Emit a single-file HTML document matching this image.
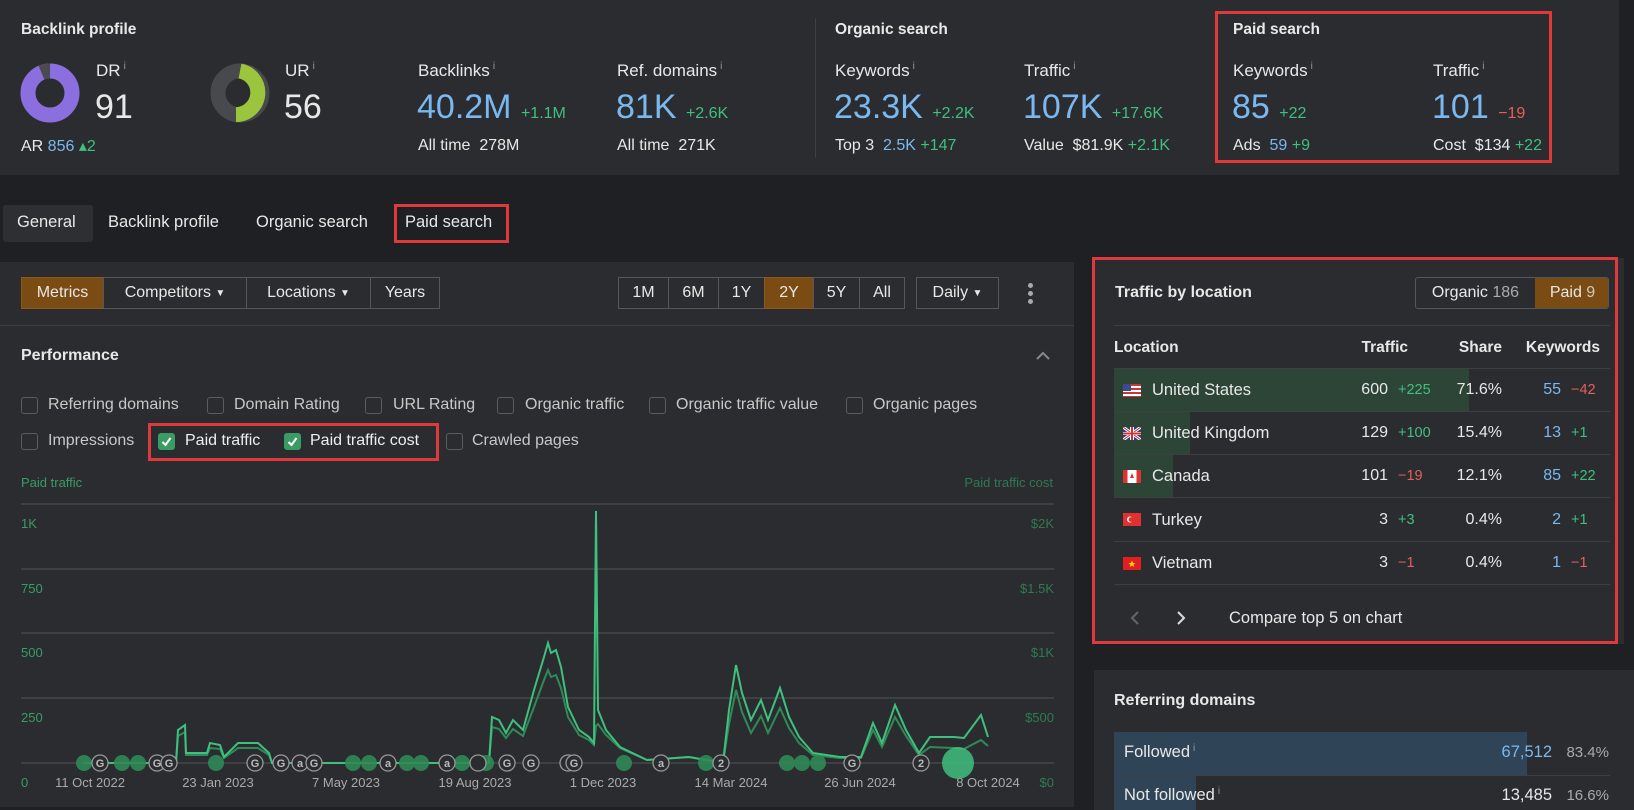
<!DOCTYPE html>
<html><head><meta charset="utf-8"><style>
*{margin:0;padding:0;box-sizing:border-box}
body{width:1634px;height:810px;background:#1f2023;font-family:"Liberation Sans",Arial,sans-serif;color:#e8e8e8;position:relative;overflow:hidden;font-size:16px}
.a{position:absolute;white-space:nowrap}
.p{position:absolute;background:#2b2c2f}
.b{color:#7ab8f0}.g{color:#3fc07e}.r{color:#e3605e}
.h{font-weight:bold;font-size:15.5px}
.lab{font-size:17px}
.big{font-size:34px;line-height:34px}
.sm{font-size:14.5px}
.i{font-size:10px;color:#999;vertical-align:top;margin-left:3px}
.red{position:absolute;border:3px solid #e0393b}
.btn{position:absolute;top:277px;height:32px;border:1px solid #55575a;display:flex;align-items:center;justify-content:center;font-size:16px}
.cb{position:absolute;width:17px;height:17px;border:1px solid #5a5c60;border-radius:3px}
.cbk{background:#3a9c64;border-color:#3a9c64}
.cl{position:absolute;font-size:16px;color:#c8c8c8}
.tr{position:absolute;left:1114px;width:496px;height:43px;border-bottom:1px solid #3d3f42}
</style></head><body>
<!-- top panel -->
<div class="p" style="left:0;top:0;width:1619px;height:175px"></div>
<div style="position:absolute;left:815px;top:18px;width:1px;height:140px;background:#3c3e41"></div>
<div class="a h" style="left:21px;top:21px">Backlink profile</div>
<svg class="a" style="left:20px;top:63px" width="60" height="60"><circle cx="30" cy="30" r="22" fill="none" stroke="#8b6fde" stroke-width="15"/><path d="M30 8 A22 22 0 0 0 21.5 9.7" fill="none" stroke="#4a4b50" stroke-width="15"/></svg>
<div class="a lab" style="left:96px;top:61px">DR<span class="i">i</span></div>
<div class="a big" style="left:95px;top:90px">91</div>
<div class="a lab" style="left:21px;top:136px;font-size:16px">AR <span class="b">856</span> <span class="g">▴2</span></div>
<svg class="a" style="left:210px;top:63px" width="60" height="60"><circle cx="30" cy="30" r="22" fill="none" stroke="#48494d" stroke-width="15"/><path d="M30 8 A22 22 0 0 1 26 51.6" fill="none" stroke="#9bc53d" stroke-width="15"/></svg>
<div class="a lab" style="left:285px;top:61px">UR<span class="i">i</span></div>
<div class="a big" style="left:284px;top:90px">56</div>
<div class="a lab" style="left:418px;top:61px">Backlinks<span class="i">i</span></div>
<div class="a big b" style="left:417px;top:90px">40.2M <span class="g" style="font-size:16px">+1.1M</span></div>
<div class="a" style="left:418px;top:137px">All time&nbsp; 278M</div>
<div class="a lab" style="left:617px;top:61px">Ref. domains<span class="i">i</span></div>
<div class="a big b" style="left:616px;top:90px">81K <span class="g" style="font-size:16px">+2.6K</span></div>
<div class="a" style="left:617px;top:137px">All time&nbsp; 271K</div>
<div class="a h" style="left:835px;top:21px">Organic search</div>
<div class="a lab" style="left:835px;top:61px">Keywords<span class="i">i</span></div>
<div class="a big b" style="left:834px;top:90px">23.3K <span class="g" style="font-size:16px">+2.2K</span></div>
<div class="a" style="left:835px;top:137px">Top 3&nbsp; <span class="b">2.5K</span> <span class="g">+147</span></div>
<div class="a lab" style="left:1024px;top:61px">Traffic<span class="i">i</span></div>
<div class="a big b" style="left:1023px;top:90px">107K <span class="g" style="font-size:16px">+17.6K</span></div>
<div class="a" style="left:1024px;top:137px">Value&nbsp; $81.9K <span class="g">+2.1K</span></div>
<div class="red" style="left:1215px;top:11px;width:337px;height:152px"></div>
<div class="a h" style="left:1233px;top:21px">Paid search</div>
<div class="a lab" style="left:1233px;top:61px">Keywords<span class="i">i</span></div>
<div class="a big b" style="left:1232px;top:90px">85 <span class="g" style="font-size:16px">+22</span></div>
<div class="a" style="left:1233px;top:137px">Ads&nbsp; <span class="b">59</span> <span class="g">+9</span></div>
<div class="a lab" style="left:1433px;top:61px">Traffic<span class="i">i</span></div>
<div class="a big b" style="left:1432px;top:90px">101 <span class="r" style="font-size:16px">−19</span></div>
<div class="a" style="left:1433px;top:137px">Cost&nbsp; $134 <span class="g">+22</span></div>
<!-- tabs -->
<div style="position:absolute;left:3px;top:205px;width:90px;height:37px;background:#2e2f33;border-radius:3px"></div>
<div class="a" style="left:17px;top:213px;font-size:16.5px">General</div>
<div class="a" style="left:108px;top:213px;font-size:16.5px">Backlink profile</div>
<div class="a" style="left:256px;top:213px;font-size:16.5px">Organic search</div>
<div class="a" style="left:405px;top:213px;font-size:16.5px">Paid search</div>
<div class="red" style="left:394px;top:204px;width:115px;height:39px"></div>
<!-- main panel -->
<div class="p" style="left:0;top:262px;width:1074px;height:545px"></div>
<div class="btn" style="left:21px;width:83px;background:#7a4c13;border-color:#8a5a1c">Metrics</div>
<div class="btn" style="left:103px;width:144px">Competitors&nbsp; <span style="font-size:10px">▼</span></div>
<div class="btn" style="left:246px;width:125px">Locations&nbsp; <span style="font-size:10px">▼</span></div>
<div class="btn" style="left:370px;width:70px">Years</div>
<div class="btn" style="left:618px;width:51px">1M</div>
<div class="btn" style="left:668px;width:51px">6M</div>
<div class="btn" style="left:718px;width:47px">1Y</div>
<div class="btn" style="left:764px;width:50px;background:#7a4c13;border-color:#8a5a1c">2Y</div>
<div class="btn" style="left:813px;width:47px">5Y</div>
<div class="btn" style="left:859px;width:46px">All</div>
<div class="btn" style="left:916px;width:83px">Daily&nbsp; <span style="font-size:10px">▼</span></div>
<div class="a" style="left:1028px;top:283px;width:6px"><div style="width:5px;height:5px;border-radius:3px;background:#aaa;margin-bottom:3px"></div><div style="width:5px;height:5px;border-radius:3px;background:#aaa;margin-bottom:3px"></div><div style="width:5px;height:5px;border-radius:3px;background:#aaa"></div></div>
<div style="position:absolute;left:0;top:325px;width:1074px;height:1px;background:#3c3e41"></div>
<div class="a h" style="left:21px;top:347px;font-size:16px">Performance</div>
<svg class="a" style="left:1035px;top:350px" width="16" height="12"><path d="M2 9 L8 3 L14 9" fill="none" stroke="#888" stroke-width="2"/></svg>
<div class="cb" style="left:21px;top:397px"></div><div class="cl" style="left:48px;top:396px">Referring domains</div>
<div class="cb" style="left:207px;top:397px"></div><div class="cl" style="left:234px;top:396px">Domain Rating</div>
<div class="cb" style="left:365px;top:397px"></div><div class="cl" style="left:393px;top:396px">URL Rating</div>
<div class="cb" style="left:497px;top:397px"></div><div class="cl" style="left:525px;top:396px">Organic traffic</div>
<div class="cb" style="left:649px;top:397px"></div><div class="cl" style="left:676px;top:396px">Organic traffic value</div>
<div class="cb" style="left:846px;top:397px"></div><div class="cl" style="left:873px;top:396px">Organic pages</div>
<div class="cb" style="left:21px;top:433px"></div><div class="cl" style="left:48px;top:432px">Impressions</div>
<div class="cb cbk" style="left:158px;top:433px"><svg width="15" height="15"><path d="M3.5 8 L6.5 11 L11.5 4" fill="none" stroke="#fff" stroke-width="2"/></svg></div><div class="cl" style="left:185px;top:432px;color:#eee">Paid traffic</div>
<div class="cb cbk" style="left:284px;top:433px"><svg width="15" height="15"><path d="M3.5 8 L6.5 11 L11.5 4" fill="none" stroke="#fff" stroke-width="2"/></svg></div><div class="cl" style="left:310px;top:432px;color:#eee">Paid traffic cost</div>
<div class="cb" style="left:446px;top:433px"></div><div class="cl" style="left:472px;top:432px">Crawled pages</div>
<div class="red" style="left:148px;top:423px;width:291px;height:38px"></div>
<div class="a" style="left:21px;top:475px;font-size:13px;color:#3a9c64">Paid traffic</div>
<div class="a" style="left:960px;top:475px;font-size:13px;color:#2f7a50;width:93px;text-align:right">Paid traffic cost</div>
<svg class="a" style="left:0;top:490px" width="1074" height="317">
<g stroke="#45474a" stroke-width="1.5"><line x1="21" y1="14" x2="1054" y2="14"/><line x1="21" y1="79" x2="1054" y2="79"/><line x1="21" y1="143" x2="1054" y2="143"/><line x1="21" y1="208" x2="1054" y2="208"/><line x1="21" y1="273" x2="1054" y2="273"/></g>
<g font-family="Liberation Sans,Arial,sans-serif" font-size="13" fill="#3a9c64"><text x="21" y="38">1K</text><text x="21" y="103">750</text><text x="21" y="167">500</text><text x="21" y="232">250</text><text x="21" y="297">0</text></g>
<g font-family="Liberation Sans,Arial,sans-serif" font-size="13" fill="#2f7a50" text-anchor="end"><text x="1054" y="38">$2K</text><text x="1054" y="103">$1.5K</text><text x="1054" y="167">$1K</text><text x="1054" y="232">$500</text><text x="1054" y="297">$0</text></g>
<g font-family="Liberation Sans,Arial,sans-serif" font-size="13" fill="#aaa" text-anchor="middle"><text x="90" y="297">11 Oct 2022</text><text x="218" y="297">23 Jan 2023</text><text x="346" y="297">7 May 2023</text><text x="475" y="297">19 Aug 2023</text><text x="603" y="297">1 Dec 2023</text><text x="731" y="297">14 Mar 2024</text><text x="860" y="297">26 Jun 2024</text><text x="988" y="297">8 Oct 2024</text></g>
<polyline fill="none" stroke="#2f8a58" stroke-width="2" points="176,273 178,246 185,242 186,265 207,265 210,258 220,259 224,268 238,258 258,258 269,265 272,273 489,273 492,237 499,239 506,248 513,239 523,246 534,217 544,190 548,180 551,187 556,185 561,198 568,227 579,245 589,250 594,255 596,236 598,234 606,245 620,258 647,270 689,267 723,273 729,234 736,200 742,222 751,243 761,226 768,243 780,218 789,238 799,253 813,265 840,268 861,268 873,240 882,257 895,227 906,246 919,265 930,257 954,258 964,259 981,250 988,256"/>
<polyline fill="none" stroke="#3fc07e" stroke-width="2" points="83,273 176,273 178,240 185,235 186,263 207,263 210,253 220,255 224,267 238,253 258,253 269,263 272,273 489,273 492,227 499,230 506,243 513,230 523,240 534,200 544,167 548,153 551,163 556,160 561,177 568,217 579,240 589,247 594,253 596,21 598,220 606,240 620,257 647,270 689,267 723,273 729,220 736,175 742,203 751,230 761,210 768,230 780,198 789,227 799,247 813,263 840,267 861,267 873,233 882,253 895,215 906,240 919,263 930,247 954,247 964,248 981,225 988,247"/>
<g fill="#2f8a58" opacity="0.9"><circle cx="84" cy="273" r="8"/><circle cx="122" cy="273" r="8"/><circle cx="138" cy="273" r="8"/><circle cx="216" cy="273" r="8"/><circle cx="353" cy="273" r="8"/><circle cx="369" cy="273" r="8"/><circle cx="407" cy="273" r="8"/><circle cx="421" cy="273" r="8"/><circle cx="462" cy="273" r="8"/><circle cx="486" cy="273" r="8"/><circle cx="624" cy="273" r="8"/><circle cx="706" cy="273" r="8"/><circle cx="787" cy="273" r="8"/><circle cx="802" cy="273" r="8"/><circle cx="818" cy="273" r="8"/></g>
<circle cx="958" cy="273" r="16" fill="#3fc07e" opacity="0.85"/>
<g fill="#2b2c2f" stroke="#999" stroke-width="1.3" font-family="Liberation Sans,Arial,sans-serif" font-size="11" font-weight="bold" text-anchor="middle">
<circle cx="100" cy="273" r="8"/><circle cx="157" cy="273" r="8"/><circle cx="169" cy="273" r="8"/><circle cx="255" cy="273" r="8"/><circle cx="281" cy="273" r="8"/><circle cx="300" cy="273" r="8"/><circle cx="314" cy="273" r="8"/><circle cx="388" cy="273" r="8"/><circle cx="447" cy="273" r="8"/><circle cx="478" cy="273" r="8"/><circle cx="507" cy="273" r="8"/><circle cx="531" cy="273" r="8"/><circle cx="568" cy="273" r="8"/><circle cx="574" cy="273" r="8"/><circle cx="661" cy="273" r="8"/><circle cx="721" cy="273" r="8"/><circle cx="852" cy="273" r="8"/><circle cx="921" cy="273" r="8"/></g>
<g fill="#bbb" font-family="Liberation Sans,Arial,sans-serif" font-size="11" font-weight="bold" text-anchor="middle">
<text x="100" y="277">G</text><text x="157" y="277">G</text><text x="169" y="277">G</text><text x="255" y="277">G</text><text x="281" y="277">G</text><text x="300" y="277">a</text><text x="314" y="277">G</text><text x="388" y="277">a</text><text x="447" y="277">a</text><text x="507" y="277">G</text><text x="531" y="277">G</text><text x="574" y="277">G</text><text x="661" y="277">a</text><text x="721" y="277">2</text><text x="852" y="277">G</text><text x="921" y="277">2</text></g>
</svg>
<!-- right panel traffic by location -->
<div class="p" style="left:1094px;top:258px;width:530px;height:386px"></div>
<div class="red" style="left:1092px;top:257px;width:526px;height:387px"></div>
<div class="a h" style="left:1115px;top:284px;font-size:16px">Traffic by location</div>
<div style="position:absolute;left:1415px;top:277px;width:194px;height:32px;border:1px solid #55575a;border-radius:3px;overflow:hidden">
<div class="a" style="left:0;top:0;width:119px;height:30px;display:flex;align-items:center;justify-content:center">Organic&nbsp;<span style="color:#aaa">186</span></div>
<div class="a" style="left:119px;top:0;width:75px;height:30px;background:#7a4c13;display:flex;align-items:center;justify-content:center">Paid&nbsp;<span style="color:#ccb">9</span></div></div>
<div style="position:absolute;left:1114px;top:325px;width:496px;height:1px;background:#3d3f42"></div>
<div class="a" style="left:1114px;top:339px;font-weight:bold;font-size:15.5px">Location</div>
<div class="a" style="left:1300px;top:339px;width:108px;text-align:right;font-weight:bold;font-size:15.5px">Traffic</div>
<div class="a" style="left:1420px;top:339px;width:82px;text-align:right;font-weight:bold;font-size:15.5px">Share</div>
<div class="a" style="left:1500px;top:339px;width:100px;text-align:right;font-weight:bold;font-size:15.5px">Keywords</div>
<div style="position:absolute;left:1114px;top:368px;width:496px;height:1px;background:#3d3f42"></div>
<div style="position:absolute;left:1114px;top:369px;width:355px;height:43px;background:#2c4537"></div>
<div style="position:absolute;left:1114px;top:412px;width:76px;height:43px;background:#2c4537"></div>
<div style="position:absolute;left:1114px;top:455px;width:59px;height:43px;background:#2c4537"></div>
<div class="tr" style="top:369px"></div><div class="tr" style="top:412px"></div><div class="tr" style="top:455px"></div><div class="tr" style="top:499px"></div><div class="tr" style="top:542px"></div>
<!-- flags -->
<svg class="a" style="left:1123px;top:384px" width="18" height="13"><rect width="18" height="13" fill="#fff"/><g fill="#c33"><rect y="0" width="18" height="2"/><rect y="4" width="18" height="2"/><rect y="8" width="18" height="2"/><rect y="12" width="18" height="1"/></g><rect width="8" height="7" fill="#3c4a8a"/></svg>
<svg class="a" style="left:1123px;top:427px" width="18" height="13"><rect width="18" height="13" fill="#2a3c8a"/><path d="M0 0L18 13M18 0L0 13" stroke="#fff" stroke-width="3"/><path d="M0 0L18 13M18 0L0 13" stroke="#c33" stroke-width="1"/><rect x="7" width="4" height="13" fill="#fff"/><rect y="5" width="18" height="3" fill="#fff"/><rect x="8" width="2" height="13" fill="#c33"/><rect y="5.5" width="18" height="2" fill="#c33"/></svg>
<svg class="a" style="left:1123px;top:470px" width="18" height="13"><rect width="18" height="13" fill="#fff"/><rect width="4.5" height="13" fill="#d33"/><rect x="13.5" width="4.5" height="13" fill="#d33"/><path d="M9 3 L11 8 L7 8Z" fill="#d33"/></svg>
<svg class="a" style="left:1123px;top:513px" width="18" height="13"><rect width="18" height="13" fill="#e03030"/><circle cx="7" cy="6.5" r="3" fill="#fff"/><circle cx="8" cy="6.5" r="2.4" fill="#e03030"/></svg>
<svg class="a" style="left:1123px;top:557px" width="18" height="13"><rect width="18" height="13" fill="#e02020"/><path d="M9 3.5 L10 6 L12.5 6 L10.5 7.5 L11.2 10 L9 8.5 L6.8 10 L7.5 7.5 L5.5 6 L8 6Z" fill="#ffd700"/></svg>
<div class="a" style="left:1152px;top:381px;font-size:16.5px">United States</div>
<div class="a" style="left:1152px;top:424px;font-size:16.5px">United Kingdom</div>
<div class="a" style="left:1152px;top:467px;font-size:16.5px">Canada</div>
<div class="a" style="left:1152px;top:511px;font-size:16.5px">Turkey</div>
<div class="a" style="left:1152px;top:554px;font-size:16.5px">Vietnam</div>
<div class="a" style="left:1330px;top:381px;width:58px;text-align:right">600</div><div class="a g sm" style="left:1398px;top:382px">+225</div>
<div class="a" style="left:1330px;top:424px;width:58px;text-align:right">129</div><div class="a g sm" style="left:1398px;top:425px">+100</div>
<div class="a" style="left:1330px;top:467px;width:58px;text-align:right">101</div><div class="a r sm" style="left:1398px;top:468px">−19</div>
<div class="a" style="left:1330px;top:511px;width:58px;text-align:right">3</div><div class="a g sm" style="left:1398px;top:512px">+3</div>
<div class="a" style="left:1330px;top:554px;width:58px;text-align:right">3</div><div class="a r sm" style="left:1398px;top:555px">−1</div>
<div class="a" style="left:1430px;top:381px;width:72px;text-align:right">71.6%</div>
<div class="a" style="left:1430px;top:424px;width:72px;text-align:right">15.4%</div>
<div class="a" style="left:1430px;top:467px;width:72px;text-align:right">12.1%</div>
<div class="a" style="left:1430px;top:511px;width:72px;text-align:right">0.4%</div>
<div class="a" style="left:1430px;top:554px;width:72px;text-align:right">0.4%</div>
<div class="a b" style="left:1510px;top:381px;width:51px;text-align:right">55</div><div class="a r sm" style="left:1571px;top:382px">−42</div>
<div class="a b" style="left:1510px;top:424px;width:51px;text-align:right">13</div><div class="a g sm" style="left:1571px;top:425px">+1</div>
<div class="a b" style="left:1510px;top:467px;width:51px;text-align:right">85</div><div class="a g sm" style="left:1571px;top:468px">+22</div>
<div class="a b" style="left:1510px;top:511px;width:51px;text-align:right">2</div><div class="a g sm" style="left:1571px;top:512px">+1</div>
<div class="a b" style="left:1510px;top:554px;width:51px;text-align:right">1</div><div class="a r sm" style="left:1571px;top:555px">−1</div>
<svg class="a" style="left:1129px;top:610px" width="12" height="16"><path d="M9 2 L3 8 L9 14" fill="none" stroke="#666" stroke-width="2"/></svg>
<svg class="a" style="left:1175px;top:610px" width="12" height="16"><path d="M3 2 L9 8 L3 14" fill="none" stroke="#ddd" stroke-width="2"/></svg>
<div class="a" style="left:1229px;top:609px;font-size:16.5px">Compare top 5 on chart</div>
<!-- referring domains -->
<div class="p" style="left:1094px;top:670px;width:540px;height:140px"></div>
<div class="a h" style="left:1114px;top:692px;font-size:16px">Referring domains</div>
<div style="position:absolute;left:1114px;top:732px;width:413px;height:43px;background:#2f4557"></div>
<div style="position:absolute;left:1114px;top:775px;width:496px;height:1px;background:#3d3f42"></div>
<div style="position:absolute;left:1114px;top:776px;width:82px;height:34px;background:#2f4557"></div>
<div class="a" style="left:1124px;top:743px;font-size:16.5px">Followed<span class="i">i</span></div>
<div class="a b" style="left:1470px;top:743px;width:82px;text-align:right;font-size:16.5px">67,512</div>
<div class="a" style="left:1560px;top:744px;width:49px;text-align:right;color:#aaa;font-size:15px">83.4%</div>
<div class="a" style="left:1124px;top:786px;font-size:16.5px">Not followed<span class="i">i</span></div>
<div class="a" style="left:1470px;top:786px;width:82px;text-align:right;font-size:16.5px">13,485</div>
<div class="a" style="left:1560px;top:787px;width:49px;text-align:right;color:#aaa;font-size:15px">16.6%</div>
</body></html>
